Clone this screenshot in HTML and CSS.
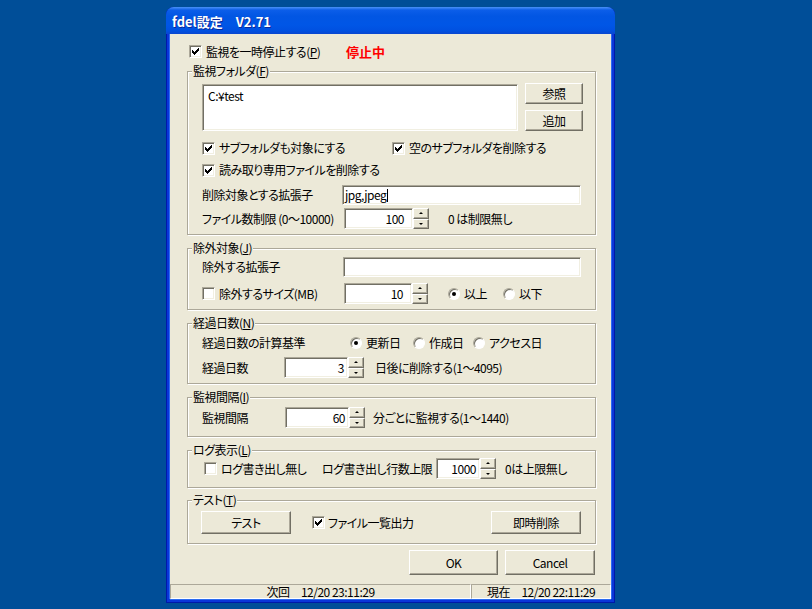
FILE: index.html
```html
<!DOCTYPE html>
<html>
<head>
	<meta charset="utf-8">
	<title>fdel設定</title>
	<link rel="stylesheet" href="styles.css">
</head>
<body>
<div class="window">
	<div class="titlebar">fdel設定　V2.71</div>
	<div class="client">

		<div class="row top_row">
			<span class="check"><svg viewBox="0 0 7 7" width="7" height="7"><path d="M0 2h1v1h1v1h1v-1h1v-1h1v-1h1v-1h1v3h-1v1h-1v1h-1v1h-1v1h-1v-1h-1v-1h-1z"/></svg></span>
			<span class="cb_text w_pause">監視を一時停止する(<u>P</u>)</span>
			<span class="stopped">停止中</span>
		</div>

		<!-- 監視フォルダ -->
		<div class="group g_folder">
			<div class="legend">監視フォルダ(<u>F</u>)</div>
			<div class="row list_row">
				<div class="field listbox">C:¥test</div>
				<div class="btn_col">
					<div class="btn b_small">参照</div>
					<div class="btn b_small">追加</div>
				</div>
			</div>
			<div class="row cb_row first">
				<span class="cb_item w_sub">
					<span class="check"><svg viewBox="0 0 7 7" width="7" height="7"><path d="M0 2h1v1h1v1h1v-1h1v-1h1v-1h1v-1h1v3h-1v1h-1v1h-1v1h-1v1h-1v-1h-1v-1h-1z"/></svg></span>
					<span class="cb_text">サブフォルダも対象にする</span>
				</span>
				<span class="cb_item">
					<span class="check"><svg viewBox="0 0 7 7" width="7" height="7"><path d="M0 2h1v1h1v1h1v-1h1v-1h1v-1h1v-1h1v3h-1v1h-1v1h-1v1h-1v1h-1v-1h-1v-1h-1z"/></svg></span>
					<span class="cb_text">空のサブフォルダを削除する</span>
				</span>
			</div>
			<div class="row cb_row">
				<span class="cb_item">
					<span class="check"><svg viewBox="0 0 7 7" width="7" height="7"><path d="M0 2h1v1h1v1h1v-1h1v-1h1v-1h1v-1h1v3h-1v1h-1v1h-1v1h-1v1h-1v-1h-1v-1h-1z"/></svg></span>
					<span class="cb_text">読み取り専用ファイルを削除する</span>
				</span>
			</div>
			<div class="row r_ext">
				<span class="w140">削除対象とする拡張子</span>
				<div class="field f_ext">jpg,jpeg<span class="caret"></span></div>
			</div>
			<div class="row r_count">
				<span class="w142">ファイル数制限 (0～10000)</span>
				<div class="field num pad8 f_count">100</div>
				<span class="spin"><span class="spin_btn"><i class="up"></i></span><span class="spin_btn"><i class="down"></i></span></span>
				<span class="n_count">0 は制限無し</span>
			</div>
		</div>

		<!-- 除外対象 -->
		<div class="group g_excl">
			<div class="legend">除外対象(<u>J</u>)</div>
			<div class="row r_exext">
				<span class="w141">除外する拡張子</span>
				<div class="field f_exext"></div>
			</div>
			<div class="row r_size">
				<span class="cb_item w142">
					<span class="check off"></span>
					<span class="cb_text">除外するサイズ(MB)</span>
				</span>
				<div class="field num pad8 f_size">10</div>
				<span class="spin"><span class="spin_btn"><i class="up"></i></span><span class="spin_btn"><i class="down"></i></span></span>
				<span class="radio_item r_gte"><span class="radio on"></span><span class="radio_text">以上</span></span>
				<span class="radio_item"><span class="radio"></span><span class="radio_text">以下</span></span>
			</div>
		</div>

		<!-- 経過日数 -->
		<div class="group g_days">
			<div class="legend">経過日数(<u>N</u>)</div>
			<div class="row r_base">
				<span class="w148">経過日数の計算基準</span>
				<span class="radio_item w63"><span class="radio on"></span><span class="radio_text">更新日</span></span>
				<span class="radio_item w60"><span class="radio"></span><span class="radio_text">作成日</span></span>
				<span class="radio_item"><span class="radio"></span><span class="radio_text">アクセス日</span></span>
			</div>
			<div class="row r_days">
				<span class="w82">経過日数</span>
				<div class="field num f_days">3</div>
				<span class="spin"><span class="spin_btn"><i class="up"></i></span><span class="spin_btn"><i class="down"></i></span></span>
				<span class="n_days">日後に削除する(1～4095)</span>
			</div>
		</div>

		<!-- 監視間隔 -->
		<div class="group g_interval">
			<div class="legend">監視間隔(<u>I</u>)</div>
			<div class="row r_interval">
				<span class="w83">監視間隔</span>
				<div class="field num f_days">60</div>
				<span class="spin"><span class="spin_btn"><i class="up"></i></span><span class="spin_btn"><i class="down"></i></span></span>
				<span class="n_interval">分ごとに監視する(1～1440)</span>
			</div>
		</div>

		<!-- ログ表示 -->
		<div class="group g_log">
			<div class="legend">ログ表示(<u>L</u>)</div>
			<div class="row r_log">
				<span class="cb_item w_nolog">
					<span class="check off"></span>
					<span class="cb_text">ログ書き出し無し</span>
				</span>
				<span class="w114">ログ書き出し行数上限</span>
				<div class="field num f_log">1000</div>
				<span class="spin"><span class="spin_btn"><i class="up"></i></span><span class="spin_btn"><i class="down"></i></span></span>
				<span class="n_log">0は上限無し</span>
			</div>
		</div>

		<!-- テスト -->
		<div class="group g_test">
			<div class="legend">テスト(<u>T</u>)</div>
			<div class="row r_test">
				<div class="btn b_test">テスト</div>
				<span class="cb_item c_list">
					<span class="check"><svg viewBox="0 0 7 7" width="7" height="7"><path d="M0 2h1v1h1v1h1v-1h1v-1h1v-1h1v-1h1v3h-1v1h-1v1h-1v1h-1v1h-1v-1h-1v-1h-1z"/></svg></span>
					<span class="cb_text c_list_text">ファイル一覧出力</span>
				</span>
				<div class="btn b_now">即時削除</div>
			</div>
		</div>

		<div class="row ok_row">
			<div class="btn b_ok">OK</div>
			<div class="btn b_cancel">Cancel</div>
		</div>

		<div class="status">
			<div class="pane pane1">次回　12/20 23:11:29</div>
			<div class="pane pane2">現在　12/20 22:11:29</div>
		</div>
	</div>
</div>
</body>
</html>
```

FILE: styles.css
```css
body { margin: 0; background: #004e98; color: #000; font: 12px/14px "Noto Sans CJK JP", "Noto Sans", sans-serif; font-feature-settings: "palt"; letter-spacing: -0.5px; }
u { text-decoration: underline; text-underline-offset: 1px; }

/* window frame */
.window { width: 449px; height: 596px; margin: 7px 0 0 166px; display: flex; flex-direction: column; background: #0a36d9; border-radius: 8px 8px 0 0; box-shadow: inset 1px 0 0 #0019a8, inset -1px 0 0 #0019a8, inset 0 -1px 0 #0019a8; }
.titlebar { height: 27px; box-sizing: border-box; padding: 3px 0 0 6px; line-height: 24px; font-size: 13px; font-weight: bold; letter-spacing: 0; color: #fff; border-radius: 8px 8px 0 0; background: linear-gradient(#4a92f6, #0c5ee9 3px, #0256e3 9px, #0056e6 18px, #0050e0 24px, #0a46cf); text-shadow: 1px 1px 0 #0a2a9c; }
.client { height: 565px; margin: 0 4px; background: #ece9d8; display: flex; flex-direction: column; box-shadow: -1px 0 0 #2c6cf0, 1px 0 0 #2c6cf0, 0 1px 0 #2c6cf0; }

/* rows */
.row { display: flex; align-items: center; white-space: nowrap; }
.row > * { flex-shrink: 0; }
.top_row { height: 19px; margin: 8px 0 0 19px; }
.w_pause { width: 140px; }
.stopped { color: #f00; font-weight: bold; font-size: 13px; letter-spacing: 0; }

/* group boxes */
.group { width: 409px; margin-left: 17px; box-sizing: border-box; border: 1px solid #aca899; box-shadow: 1px 1px 0 #fff, inset 1px 1px 0 #fff; padding-left: 14px; }
.legend { width: max-content; height: 14px; margin: -8px 0 0 -10px; padding: 0 1px; background: #ece9d8; }
.g_folder { margin-top: 10px; padding-bottom: 5px; }
.g_excl { margin-top: 13px; padding-bottom: 5px; }
.g_days { margin-top: 13px; padding-bottom: 5px; }
.g_interval { margin-top: 13px; padding-bottom: 8px; }
.g_log { margin-top: 13px; padding-bottom: 8px; }
.g_test { margin-top: 12px; padding-bottom: 9px; }

/* controls */
.check { width: 13px; height: 13px; box-sizing: border-box; display: flex; align-items: center; justify-content: center; background: #fff; border: 1px solid; border-color: #aca899 #fff #fff #aca899; box-shadow: inset 1px 1px 0 #716f64, inset -1px -1px 0 #f1efe2; }
.check svg { display: block; fill: #000; shape-rendering: crispEdges; }
.cb_item { display: flex; align-items: center; }
.cb_text { margin-left: 4px; }
.radio { width: 12px; height: 12px; box-sizing: border-box; border-radius: 50%; display: flex; align-items: center; justify-content: center; background: #fff; border: 1px solid; border-color: #aca899 #fff #fff #aca899; box-shadow: inset 1px 1px 0 #716f64; }
.radio.on::after { content: ""; width: 4px; height: 4px; border-radius: 50%; background: #000; }
.radio_item { display: flex; align-items: center; }
.radio_text { margin-left: 4px; }
.field { box-sizing: border-box; display: flex; align-items: center; background: #fff; padding: 0 3px; border: 1px solid; border-color: #aca899 #fff #fff #aca899; box-shadow: inset 1px 1px 0 #716f64, inset -1px -1px 0 #f1efe2; }
.field.num { justify-content: flex-end; padding-right: 3px; }
.field.pad8 { padding-right: 8px; }
.caret { width: 1px; height: 13px; background: #000; margin-left: 1px; }
.spin { width: 16px; height: 21px; display: flex; flex-direction: column; }
.spin_btn { flex: 1; box-sizing: border-box; display: flex; align-items: center; justify-content: center; background: #ece9d8; border: 1px solid; border-color: #fff #716f64 #716f64 #fff; box-shadow: inset -1px -1px 0 #aca899; }
.spin_btn i { width: 0; height: 0; border-left: 2px solid transparent; border-right: 2px solid transparent; }
.spin_btn .up { border-bottom: 2px solid #000; }
.spin_btn .down { border-top: 2px solid #000; }
.btn { box-sizing: border-box; display: flex; align-items: center; justify-content: center; background: #ece9d8; border: 1px solid; border-color: #fff #716f64 #716f64 #fff; box-shadow: inset -1px -1px 0 #aca899; }

/* 監視フォルダ */
.list_row { margin-top: 5px; height: 48px; align-items: flex-start; }
.listbox { width: 316px; height: 47px; margin-top: 1px; align-items: flex-start; padding: 4px 5px; }
.btn_col { display: flex; flex-direction: column; gap: 6px; margin-left: 7px; }
.b_small { width: 58px; height: 21px; }
.cb_row { height: 22px; }
.cb_row.first { margin-top: 6px; }
.w_sub { width: 190px; }
.r_ext { margin-top: 4px; height: 20px; }
.w140 { width: 140px; }
.f_ext { width: 239px; height: 20px; padding-left: 2px; }
.r_count { margin-top: 3px; height: 21px; }
.w142 { width: 142px; }
.f_count { width: 69px; height: 21px; }
.n_count { margin-left: 19px; }

/* 除外対象 */
.r_exext { margin-top: 2px; height: 20px; }
.w141 { width: 141px; }
.f_exext { width: 238px; height: 20px; }
.r_size { margin-top: 6px; height: 21px; }
.f_size { width: 68px; height: 21px; }
.r_gte { width: 55px; margin-left: 20px; }

/* 経過日数 */
.r_base { margin-top: 3px; height: 20px; }
.w148 { width: 148px; }
.w63 { width: 63px; }
.w60 { width: 60px; }
.r_days { margin-top: 4px; height: 21px; }
.w82 { width: 82px; }
.f_days { width: 64px; height: 21px; }
.n_days { margin-left: 11px; }

/* 監視間隔 */
.r_interval { margin-top: 3px; height: 21px; }
.w83 { width: 83px; }
.n_interval { margin-left: 8px; }

/* ログ表示 */
.r_log { margin-top: 1px; height: 21px; }
.w_nolog { width: 118px; margin-left: 2px; }
.w114 { width: 114px; }
.f_log { width: 44px; height: 21px; padding-right: 2px; }
.n_log { margin-left: 9px; }

/* テスト */
.r_test { margin-top: 4px; height: 23px; }
.b_test { width: 90px; height: 23px; margin-left: -1px; }
.c_list { margin-left: 21px; }
.c_list_text { margin-left: 3px; }
.b_now { width: 90px; height: 23px; margin: 0 14px 0 auto; }

/* OK / Cancel */
.ok_row { margin-top: 6px; height: 25px; justify-content: flex-end; gap: 7px; padding-right: 16px; }
.b_ok { width: 89px; height: 25px; }
.b_cancel { width: 90px; height: 25px; }

/* status bar */
.status { margin-top: auto; height: 15px; display: flex; }
.pane { box-sizing: border-box; border: 1px solid; border-color: #aca899 #fff #fff #aca899; text-align: center; line-height: 13px; white-space: nowrap; }
.pane1 { width: 301px; }
.pane2 { flex: 1; }
```
